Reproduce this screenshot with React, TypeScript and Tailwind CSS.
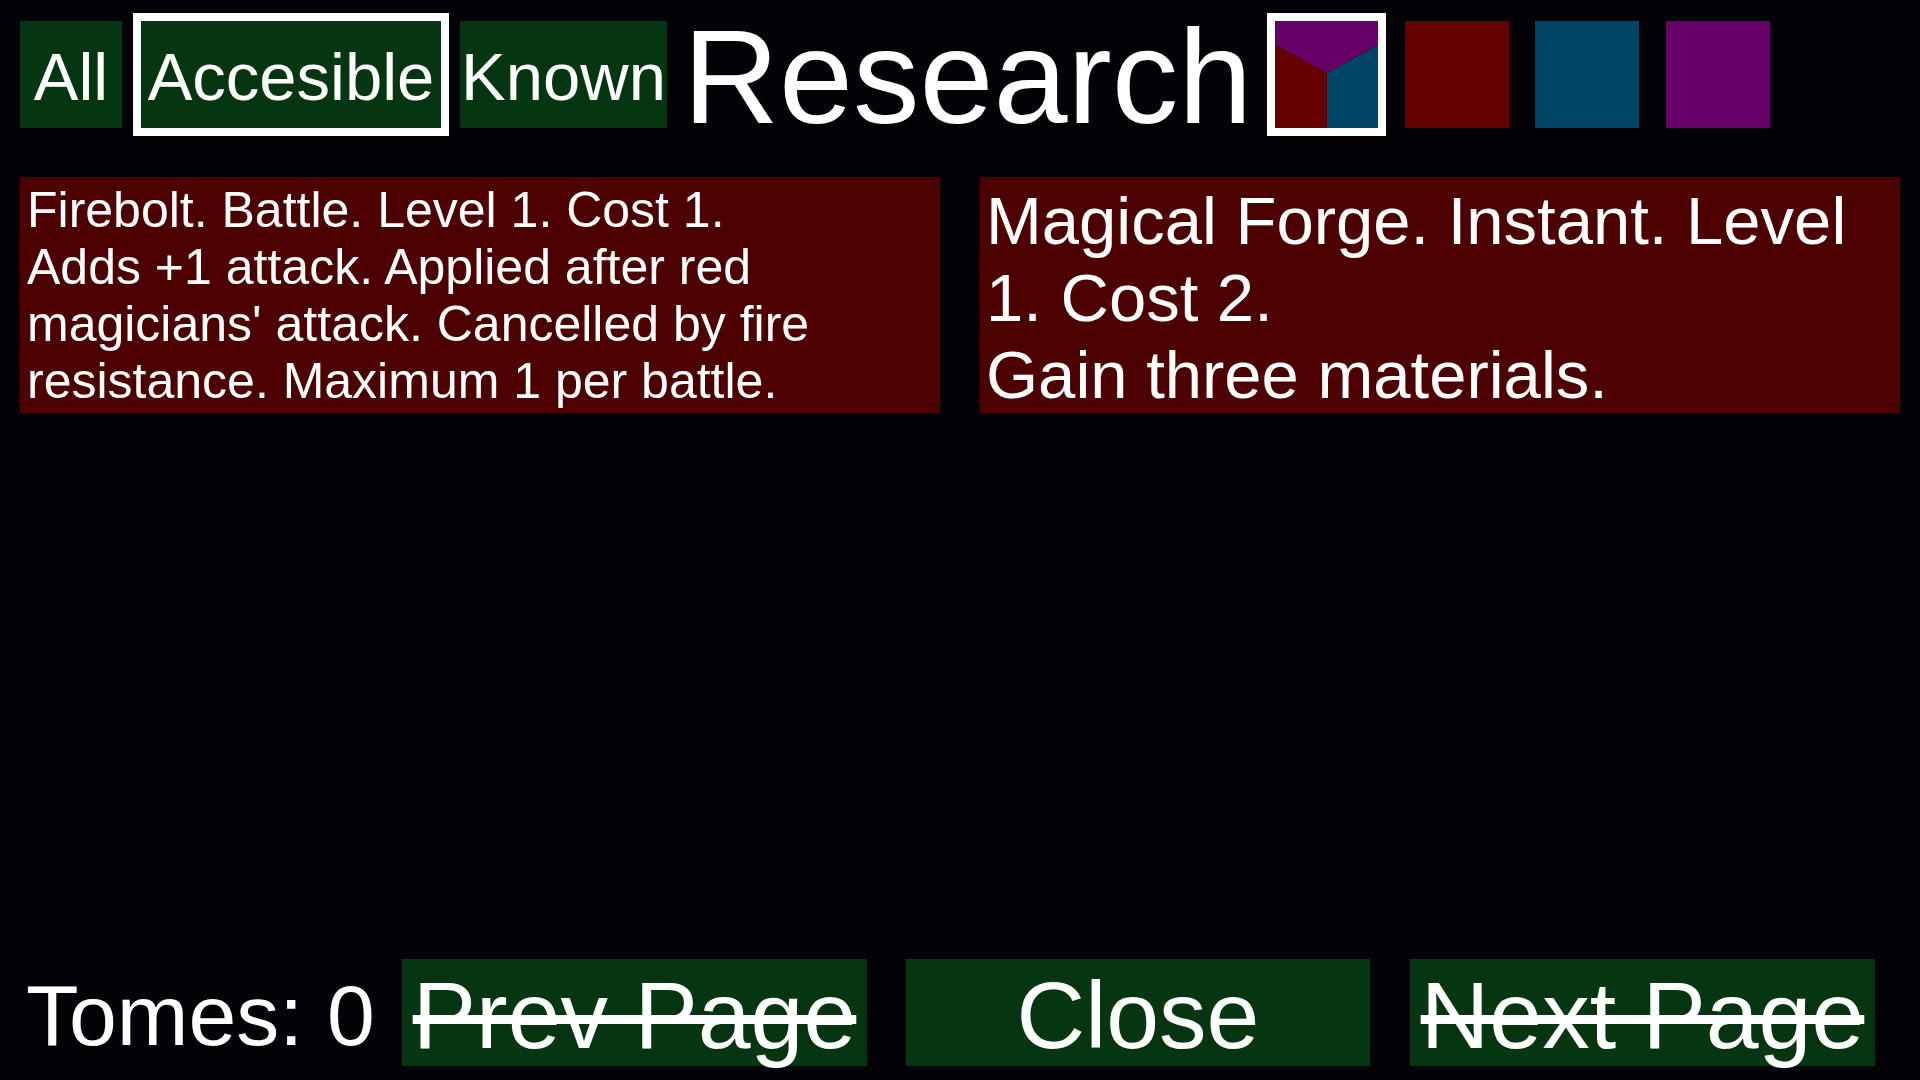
import React from 'react';

const FONT = { fontFamily: '"Liberation Sans", Arial, sans-serif' };

const FilterButton = ({ label, width, selected }: { label: string; width: string; selected?: boolean }) => (
  <div
    className={`${width} h-[107px] shrink-0 bg-[#063611] text-white text-[67px] leading-[107px] pt-[2px] text-center whitespace-nowrap ${
      selected ? 'shadow-[0_0_0_8px_#ffffff]' : ''
    }`}
  >
    {label}
  </div>
);

const NavButton = ({ label, disabled, className }: { label: string; disabled?: boolean; className: string }) => (
  <div
    className={`${className} h-[107px] shrink-0 bg-[#063611] text-white text-[95px] leading-[107px] pt-[3px] text-center whitespace-nowrap overflow-visible ${
      disabled ? 'line-through' : ''
    }`}
  >
    {label}
  </div>
);

const SpellCard = ({ lines, size }: { lines: string[]; size: 'sm' | 'lg' }) => (
  <div
    className={`w-[920px] h-[236px] shrink-0 bg-[#4c0000] text-white pt-[5px] ${
      size === 'sm' ? 'pl-[7px] text-[50px] leading-[57px]' : 'pl-[6px] text-[67px] leading-[77px]'
    }`}
  >
    {lines.map((line) => (
      <div key={line} className="whitespace-nowrap">
        {line}
      </div>
    ))}
  </div>
);

export default function App() {
  return (
    <div className="min-h-screen w-full bg-[#030307] flex flex-col overflow-hidden" style={FONT}>
      {/* filters, title, colour selector */}
      <div className="flex items-start pt-[21px] pl-[20px]">
        <FilterButton label="All" width="w-[102px]" />
        <div className="ml-[19px]">
          <FilterButton label="Accesible" width="w-[300px]" selected />
        </div>
        <div className="ml-[19px]">
          <FilterButton label="Known" width="w-[207px]" />
        </div>
        <div className="ml-[16px] w-[561px] shrink-0 h-[107px] text-white text-[133px] leading-[107px] pt-[3px] whitespace-nowrap">
          Research
        </div>
        <div className="ml-[31px] w-[103px] h-[107px] shrink-0 shadow-[0_0_0_8px_#ffffff]">
          <svg viewBox="0 0 103 107" width="103" height="107" className="block">
            <polygon points="0,0 103,0 103,24 52,52 0,24" fill="#660066" />
            <polygon points="0,24 52,52 52,107 0,107" fill="#660000" />
            <polygon points="103,24 52,52 52,107 103,107" fill="#004466" />
          </svg>
        </div>
        <div className="ml-[27px] w-[104px] h-[107px] bg-[#660000]" />
        <div className="ml-[26px] w-[104px] h-[107px] bg-[#004466]" />
        <div className="ml-[27px] w-[104px] h-[107px] bg-[#660066]" />
      </div>

      {/* spells */}
      <div className="flex gap-[40px] pl-[20px] mt-[49px]">
        <SpellCard
          size="sm"
          lines={[
            'Firebolt. Battle. Level 1. Cost 1.',
            'Adds +1 attack. Applied after red',
            "magicians' attack. Cancelled by fire",
            'resistance. Maximum 1 per battle.',
          ]}
        />
        <SpellCard size="lg" lines={['Magical Forge. Instant. Level', '1. Cost 2.', 'Gain three materials.']} />
      </div>

      {/* footer */}
      <div className="mt-auto mb-[14px] flex items-start pl-[26px]">
        <div className="w-[376px] shrink-0 h-[107px] text-white text-[86px] leading-[107px] pt-[3px] whitespace-nowrap">
          Tomes: 0
        </div>
        <NavButton label="Prev Page" disabled className="w-[465px]" />
        <NavButton label="Close" className="ml-[39px] w-[464px]" />
        <NavButton label="Next Page" disabled className="ml-[40px] w-[465px]" />
      </div>
    </div>
  );
}
